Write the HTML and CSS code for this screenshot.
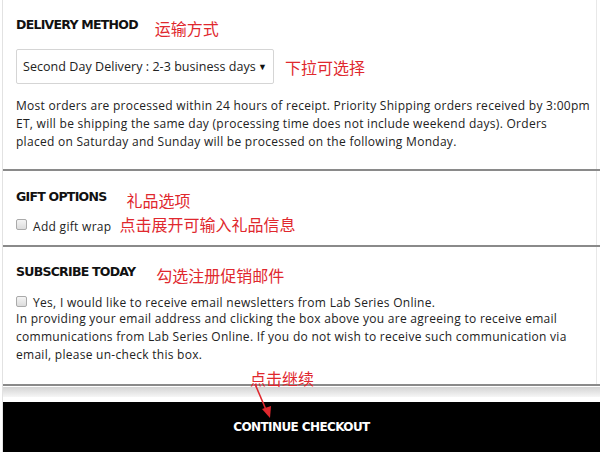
FILE: index.html
```html
<!DOCTYPE html>
<html>
<head>
<meta charset="utf-8">
<link rel="stylesheet" href="styles.css">
</head>
<body>
<div class="page">
  <section class="sec sec-delivery">
    <div class="head-row">
      <h2 class="title">DELIVERY METHOD</h2>
      <span class="note note-1">运输方式</span>
    </div>
    <div class="select-row">
      <div class="select">
        <span>Second Day Delivery : 2-3 business days</span>
        <span class="caret">&#9660;</span>
      </div>
      <span class="note note-2">下拉可选择</span>
    </div>
    <p class="text">Most orders are processed within 24 hours of receipt. Priority Shipping orders received by 3:00pm ET, will be shipping the same day (processing time does not include weekend days). Orders<br>placed on Saturday and Sunday will be processed on the following Monday.</p>
  </section>
  <div class="rule"></div>
  <section class="sec sec-gift">
    <div class="head-row">
      <h2 class="title">GIFT OPTIONS</h2>
      <span class="note note-3">礼品选项</span>
    </div>
    <div class="check-row">
      <span class="box"></span>
      <span class="label">Add gift wrap</span>
      <span class="note note-4">点击展开可输入礼品信息</span>
    </div>
  </section>
  <div class="rule"></div>
  <section class="sec sec-sub">
    <div class="head-row">
      <h2 class="title">SUBSCRIBE TODAY</h2>
      <span class="note note-5">勾选注册促销邮件</span>
    </div>
    <div class="check-row check-row-2">
      <span class="box"></span>
      <span class="label">Yes, I would like to receive email newsletters from Lab Series Online.</span>
    </div>
    <p class="text">In providing your email address and clicking the box above you are agreeing to receive email communications from Lab Series Online. If you do not wish to receive such communication via email, please un-check this box.</p>
  </section>
  <div class="rule rule-last"></div>
  <div class="shade"></div>
  <div class="cta">CONTINUE CHECKOUT</div>
  <span class="note note-6">点击继续</span>
  <svg class="arrow" width="30" height="40" viewBox="0 0 30 40">
    <line x1="3" y1="2" x2="15" y2="30" stroke="#e0282e" stroke-width="1.6"/>
    <polygon points="10,27 19,24 18,36" fill="#e0282e"/>
  </svg>
</div>
</body>
</html>
```
FILE: styles.css
```css
html, body {
  margin: 0;
  padding: 0;
  background: #fff;
}
body {
  font-family: "Open Sans", "Liberation Sans", sans-serif;
  color: #222;
  width: 600px;
  height: 452px;
  overflow: hidden;
}
.page {
  position: relative;
  margin-left: 2px;
  border-left: 1px solid #e2e2e2;
  height: 452px;
}
.sec {
  padding: 0 3px 0 13px;
  border-right: 1px solid #e8e8e8;
  margin-right: 3px;
}
.sec-delivery {
  padding-top: 15px;
  height: 154px;
}
.sec-gift {
  height: 74px;
}
.sec-sub {
  height: 137px;
}
.head-row {
  display: flex;
  align-items: flex-end;
}
.title {
  margin: 0;
  font-family: "DejaVu Sans", sans-serif;
  font-weight: bold;
  font-size: 12.5px;
  letter-spacing: -0.75px;
  color: #111;
  line-height: 16px;
}
.note {
  font-family: "Noto Sans CJK SC", sans-serif;
  font-size: 16px;
  color: #e0282e;
  line-height: 18px;
}
.note-1 { margin-left: 17px; position: relative; top: 4px; }
.select-row {
  display: flex;
  align-items: center;
  margin-top: 16px;
}
.select {
  height: 35px;
  border: 1px solid #d5d5d5;
  border-radius: 2px;
  display: flex;
  align-items: center;
  justify-content: space-between;
  padding: 0 6px 0 6px;
  box-sizing: border-box;
  width: 258px;
  font-size: 12.5px;
  letter-spacing: 0.05px;
  white-space: nowrap;
  color: #222;
}
.caret {
  font-size: 9px;
  color: #111;
}
.note-2 { margin-left: 11px; }
.text {
  margin: 13px 0 0 0;
  font-size: 12px;
  letter-spacing: 0.28px;
  line-height: 18px;
  color: #222;
}
.rule {
  height: 2px;
  background: #8a8a8a;
}
.sec-gift .head-row { padding-top: 16px; }
.note-3 { margin-left: 20px; position: relative; top: 4px; }
.check-row {
  display: flex;
  align-items: center;
  margin-top: 10px;
}
.box {
  width: 11px;
  height: 11px;
  border: 1px solid #aaa;
  border-radius: 2px;
  background: linear-gradient(#f4f4f4, #dcdcdc);
  box-sizing: border-box;
  flex: none;
}
.label {
  font-size: 12px;
  letter-spacing: 0.3px;
  margin-left: 6px;
  position: relative;
  top: 2px;
}
.note-4 { margin-left: 8px; }
.sec-sub .head-row { padding-top: 15px; }
.note-5 { margin-left: 21px; position: relative; top: 4px; }
.check-row-2 { margin-top: 13px; }
.check-row-2 .label { top: 1px; }
.sec-sub .text { margin-top: 0; }
.shade {
  height: 10px;
  background: linear-gradient(#d4d4d4, #f6f6f6);
  margin-top: 1px;
}
.cta {
  margin-top: 5px;
  height: 50px;
  background: #000;
  color: #fff;
  font-family: "DejaVu Sans", sans-serif;
  font-weight: bold;
  font-size: 12px;
  letter-spacing: -0.6px;
  display: flex;
  align-items: center;
  justify-content: center;
}
.note-6 {
  position: absolute;
  left: 247px;
  top: 369px;
}
.arrow {
  position: absolute;
  left: 249px;
  top: 382px;
}
```
